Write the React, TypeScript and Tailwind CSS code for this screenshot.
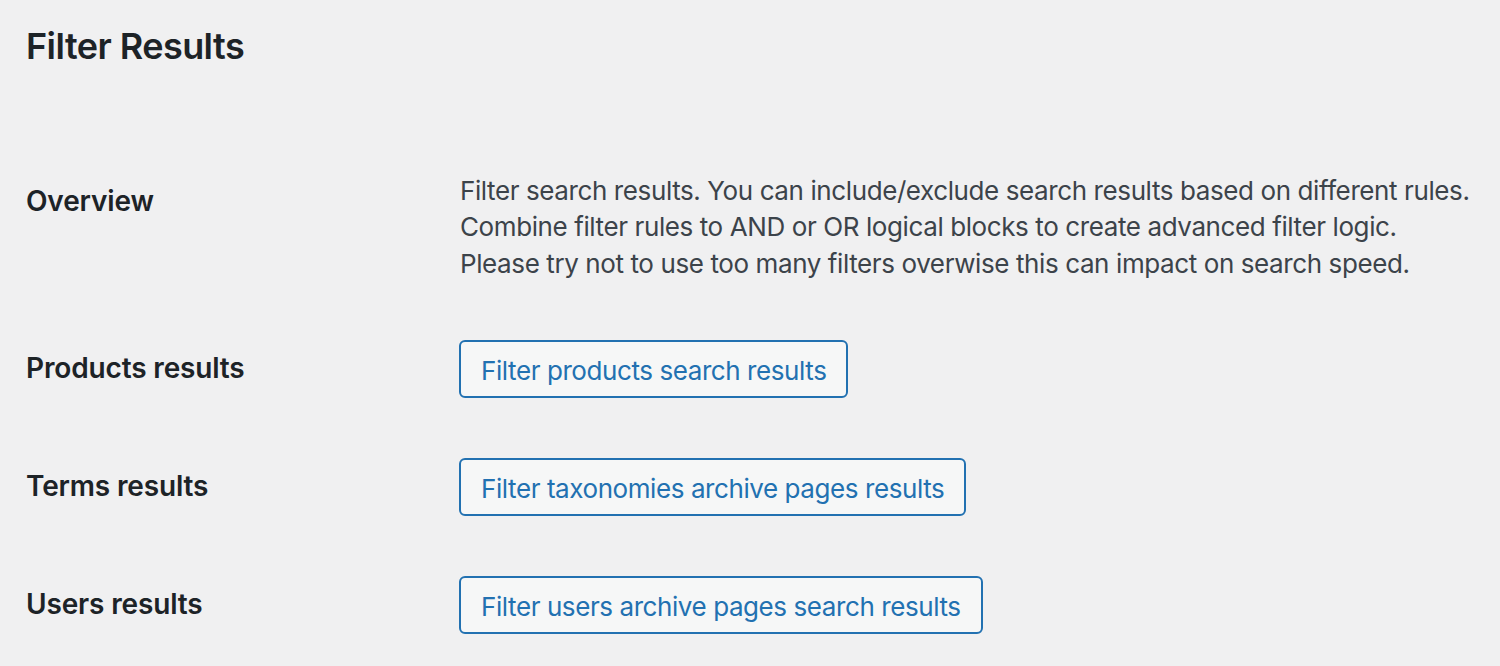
import React from "react";

const rows = [
  { label: "Products results", button: "Filter products search results" },
  { label: "Terms results", button: "Filter taxonomies archive pages results" },
  { label: "Users results", button: "Filter users archive pages search results" },
];

export default function App() {
  return (
    <div
      className="min-h-screen w-full bg-[#f0f0f1] pl-[26px] pt-[23px]"
      style={{ fontFamily: "Inter, 'Noto Sans', 'Liberation Sans', sans-serif" }}
    >
      <h1 className="m-0 text-[36px] font-semibold leading-[46px] tracking-[-0.55px] text-[#1d2327]">Filter Results</h1>
      <div className="mt-[74px]">
        <div className="grid grid-cols-[433px_1fr]">
          <div className="pt-[40px] text-[28px] font-semibold leading-[36.4px] tracking-[-0.15px] text-[#1d2327]">Overview</div>
          <div className="pl-px pt-[30px] pb-[28px] text-[26px] leading-[36.4px] tracking-[-0.4px] text-[#3c434a]">
            <div className="whitespace-nowrap">
              Filter search results. You can include/exclude search results based on different rules.
            </div>
            <div className="whitespace-nowrap">
              Combine filter rules to AND or OR logical blocks to create advanced filter logic.
            </div>
            <div className="whitespace-nowrap">
              Please try not to use too many filters overwise this can impact on search speed.
            </div>
          </div>
        </div>
        {rows.map((r) => (
          <div key={r.label} className="grid grid-cols-[433px_1fr]">
            <div className="pt-[40px] text-[28px] font-semibold leading-[36.4px] tracking-[-0.15px] text-[#1d2327]">{r.label}</div>
            <div className="py-[30px]">
              <button
                type="button"
                className="flex h-[58px] items-center rounded-[6px] border-2 border-[#2271b1] bg-[#f6f7f7] px-[20px] pt-[3px] text-[26px] leading-none tracking-[-0.42px] text-[#2271b1] whitespace-nowrap"
              >
                {r.button}
              </button>
            </div>
          </div>
        ))}
      </div>
    </div>
  );
}
